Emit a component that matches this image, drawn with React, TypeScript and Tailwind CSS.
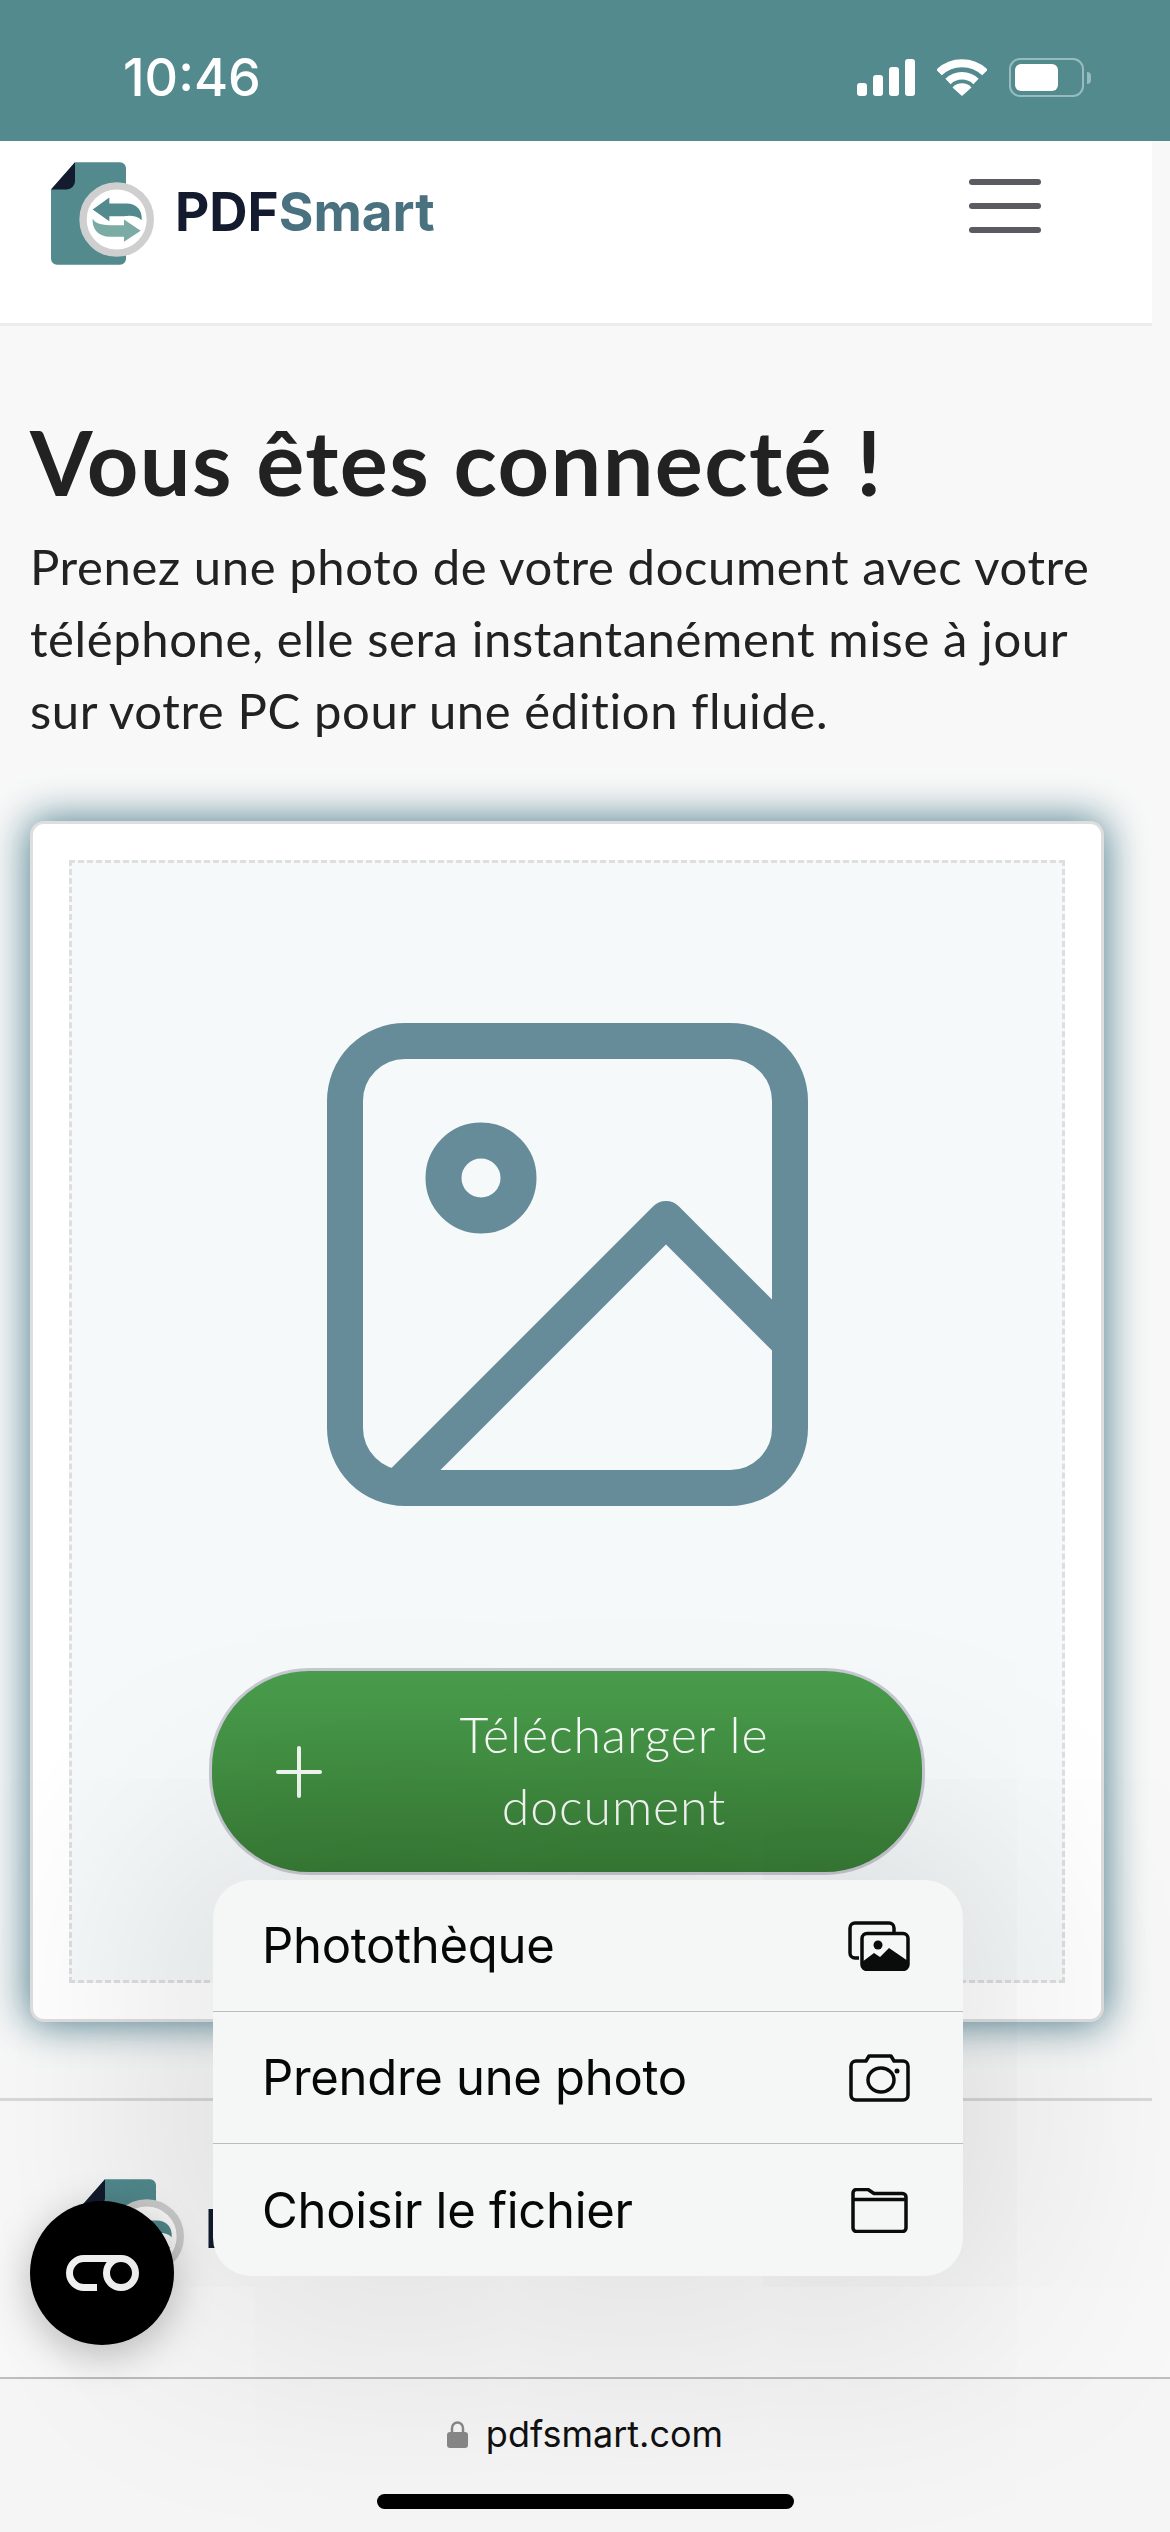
import React from "react";

function Logo() {
  return (
    <svg viewBox="93 66 309 308" className="w-[103px] h-[103px] shrink-0">
      <path d="M165 66H300a18 18 0 0 1 18 18V356a18 18 0 0 1-18 18H111a18 18 0 0 1-18-18V148Z" fill="#528a8e" />
      <path d="M165 66L93 148H140a25 25 0 0 0 25-25Z" fill="#141b2e" />
      <circle cx="290" cy="238" r="101" fill="#fff" stroke="#cfcfcf" strokeWidth="22" />
      <path d="M218 208L268 172V190H320C350 190 368 212 365 240C350 225 330 225 310 228H268V243Z" fill="#528a8e" />
      <path d="M362 272L312 238V255H270C245 255 225 250 218 235C215 265 235 290 270 290H312V305Z" fill="#7aaba5" />
    </svg>
  );
}

function Brand() {
  return (
    <div className="flex items-center gap-[21px]">
      <Logo />
      <span className="mb-[3px] text-[53px] leading-none font-bold [font-family:Inter,sans-serif]">
        <span className="text-[#141b2e]">PDF</span>
        <span className="text-[#4a7180]">Smart</span>
      </span>
    </div>
  );
}

function MenuRow({ label, children, last }: { label: string; children: React.ReactNode; last?: boolean }) {
  return (
    <div className={`flex h-[132px] items-center justify-between pl-[49px] pr-[53px] ${last ? "" : "border-b border-[#bbbdbd]"}`}>
      <span className="text-[49px] leading-none tracking-[-0.3px] text-[#060808] [font-family:Inter,sans-serif]">{label}</span>
      <span className="flex h-[62px] w-[62px] items-center justify-center">{children}</span>
    </div>
  );
}

export default function App() {
  return (
    <div className="relative flex h-[2532px] w-[1170px] flex-col overflow-hidden bg-[#f8f8f8] [font-family:Lato,sans-serif]">
      {/* Status bar */}
      <div className="flex h-[141px] shrink-0 items-start justify-between bg-[#528a8e] pl-[123px] pr-[79px] pt-[52px]">
        <span className="text-[52px] font-medium leading-[52px] text-white [font-family:Inter,sans-serif]">10:46</span>
        <div className="flex items-center gap-[22px] pt-[6px]">
          <svg viewBox="0 0 58 37" className="h-[37px] w-[58px]" fill="#fff">
            <rect x="0" y="24" width="10" height="13" rx="3" />
            <rect x="16" y="16" width="10" height="21" rx="3" />
            <rect x="32" y="8" width="10" height="29" rx="3" />
            <rect x="48" y="0" width="10" height="37" rx="3" />
          </svg>
          <svg viewBox="0 0 50 37" className="h-[37px] w-[50px]" fill="none" stroke="#fff">
            <path d="M2 13.5A33 33 0 0 1 48 13.5" strokeWidth="8" />
            <path d="M11 22.5A20 20 0 0 1 39 22.5" strokeWidth="7.5" />
            <path d="M15.5 28.5A13 13 0 0 1 34.5 28.5L25 37Z" fill="#fff" stroke="none" />
          </svg>
          <div className="flex items-center gap-[3px]">
            <div className="flex h-[39px] w-[75px] items-center rounded-[11px] border-[2px] border-[#98bcbe] pl-[4px]">
              <div className="h-[27px] w-[43px] rounded-[6px] bg-white" />
            </div>
            <div className="h-[12px] w-[4px] rounded-r-full bg-[#98bcbe]" />
          </div>
        </div>
      </div>

      {/* Site header */}
      <header className="flex h-[185px] w-[1152px] shrink-0 items-start justify-between border-b-[3px] border-[#ececec] bg-white pl-[51px] pr-[111px] pt-[21px]">
        <Brand />
        <div className="mt-[17px] flex w-[72px] flex-col gap-[18px]">
          <div className="h-[6px] rounded-full bg-[#5a5a60]" />
          <div className="h-[6px] rounded-full bg-[#5a5a60]" />
          <div className="h-[6px] rounded-full bg-[#5a5a60]" />
        </div>
      </header>

      {/* Main */}
      <main className="w-[1152px] flex-1 border-b-[3px] border-[#d8d8d8] pl-[30px] pt-[80px]">
        <h1 className="text-[90px] font-bold leading-[110px] tracking-[1.4px] text-[#222222]">Vous êtes connecté !</h1>
        <p className="mt-[14px] text-[49px] leading-[72px] tracking-[0.6px] text-[#222222]">
          Prenez une photo de votre document avec votre
          <br />
          téléphone, elle sera instantanément mise à jour
          <br />
          sur votre PC pour une édition fluide.
        </p>
        <div className="mt-[75px] h-[1201px] w-[1074px] rounded-[14px] border-[3px] border-[#dedede] bg-white p-[36px] shadow-[0_0_40px_2px_#4f8090]">
          <div className="flex h-full flex-col items-center border-[3px] border-dashed border-[#dedede] bg-[#f5f9fa] pt-[160px]">
            <svg viewBox="326 1023 481 483" className="h-[483px] w-[481px]" fill="none" stroke="#668c9a" strokeWidth="36" strokeLinejoin="round">
              <rect x="344" y="1041" width="445" height="447" rx="60" />
              <circle cx="480" cy="1178" r="37.5" />
              <path d="M400 1484L665 1219L800 1354" />
            </svg>
            <button className="mt-[162px] flex h-[207px] w-[716px] items-center rounded-[100px] border-[3px] border-[#c8c8d2] bg-gradient-to-b from-[#4a9e4d] to-[#387c36] pl-[64px] pr-[84px]">
              <svg viewBox="0 0 46 52" className="h-[52px] w-[46px] shrink-0" stroke="#f2f7f2" strokeWidth="4" strokeLinecap="round">
                <path d="M23 2V50M2 26H44" />
              </svg>
              <span className="mb-[3px] flex-1 pl-[68px] text-center text-[50px] font-light leading-[72px] tracking-[0.9px] text-[#f8fbf8]">
                Télécharger le document
              </span>
            </button>
          </div>
        </div>
      </main>

      {/* Footer */}
      <footer className="h-[276px] w-[1152px] shrink-0 pl-[81px] pt-[78px]">
        <Brand />
      </footer>

      {/* Browser chrome */}
      <div className="flex h-[155px] shrink-0 flex-col items-center border-t-[2px] border-[#bdbdbd] bg-[#f5f5f5] pt-[35px]">
        <div className="flex items-center gap-[18px]">
          <svg viewBox="0 0 21 27" className="h-[27px] w-[21px]">
            <path d="M5 12V7a5.5 5.5 0 0 1 11 0v5" fill="none" stroke="#888" strokeWidth="2.5" />
            <rect x="0" y="11" width="21" height="16" rx="3" fill="#888" />
          </svg>
          <span className="text-[36px] leading-[40px] text-[#111] [font-family:Inter,sans-serif]">pdfsmart.com</span>
        </div>
        <div className="mt-[40px] h-[15px] w-[417px] rounded-full bg-black" />
      </div>

      {/* Floating circle */}
      <div className="absolute left-[30px] top-[2201px] flex h-[144px] w-[144px] items-center justify-center rounded-full bg-black shadow-[0_10px_40px_rgba(0,0,0,0.25)]">
        <svg viewBox="0 0 73 36" className="h-[36px] w-[73px]" fill="none" stroke="#f4f4f4" strokeWidth="7">
          <path d="M31 32.5H18A14.5 14.5 0 0 1 18 3.5H55A14.5 14.5 0 1 1 40.5 18A14.5 14.5 0 0 1 55 3.5" />
        </svg>
      </div>

      {/* Action menu */}
      <div className="absolute left-[213px] top-[1880px] w-[750px] overflow-hidden rounded-[38px] bg-[#f5f6f6] shadow-[0_0_230px_60px_rgba(0,0,0,0.115)]">
        <MenuRow label="Photothèque">
          <svg viewBox="0 0 62 50" className="h-[50px] w-[62px]" fill="none">
            <path d="M11 37H7a5 5 0 0 1-5-5V7a5 5 0 0 1 5-5H41a5 5 0 0 1 5 5v4" stroke="#0a0c0c" strokeWidth="3.5" />
            <rect x="14" y="12.5" width="46" height="36" rx="5" stroke="#0a0c0c" strokeWidth="3.5" />
            <path d="M14 41L26 32L32 36L41 27L60 40V44a5 5 0 0 1-5 5H19a5 5 0 0 1-5-5Z" fill="#0a0c0c" />
            <circle cx="30" cy="24" r="4.5" fill="#0a0c0c" />
          </svg>
        </MenuRow>
        <MenuRow label="Prendre une photo">
          <svg viewBox="0 0 61 48" className="h-[48px] w-[61px]" fill="none" stroke="#0a0c0c" strokeWidth="3.5" strokeLinejoin="round">
            <path d="M7 7H17L20 2H42L45 7H54a5 5 0 0 1 5 5V41a5 5 0 0 1-5 5H7a5 5 0 0 1-5-5V12a5 5 0 0 1 5-5Z" />
            <ellipse cx="32" cy="26" rx="13" ry="12" />
            <circle cx="48" cy="17" r="2.5" fill="#0a0c0c" stroke="none" />
          </svg>
        </MenuRow>
        <MenuRow label="Choisir le fichier" last>
          <svg viewBox="0 0 57 45" className="h-[45px] w-[57px]" fill="none" stroke="#0a0c0c" strokeWidth="3.5" strokeLinejoin="round">
            <path d="M2 5a3.5 3.5 0 0 1 3.5-3.5H17L23 5.5H51.5a3.5 3.5 0 0 1 3.5 3.5V40a3.5 3.5 0 0 1-3.5 3.5H5.5A3.5 3.5 0 0 1 2 40Z" />
            <path d="M2 11.5H55" />
          </svg>
        </MenuRow>
      </div>
    </div>
  );
}
